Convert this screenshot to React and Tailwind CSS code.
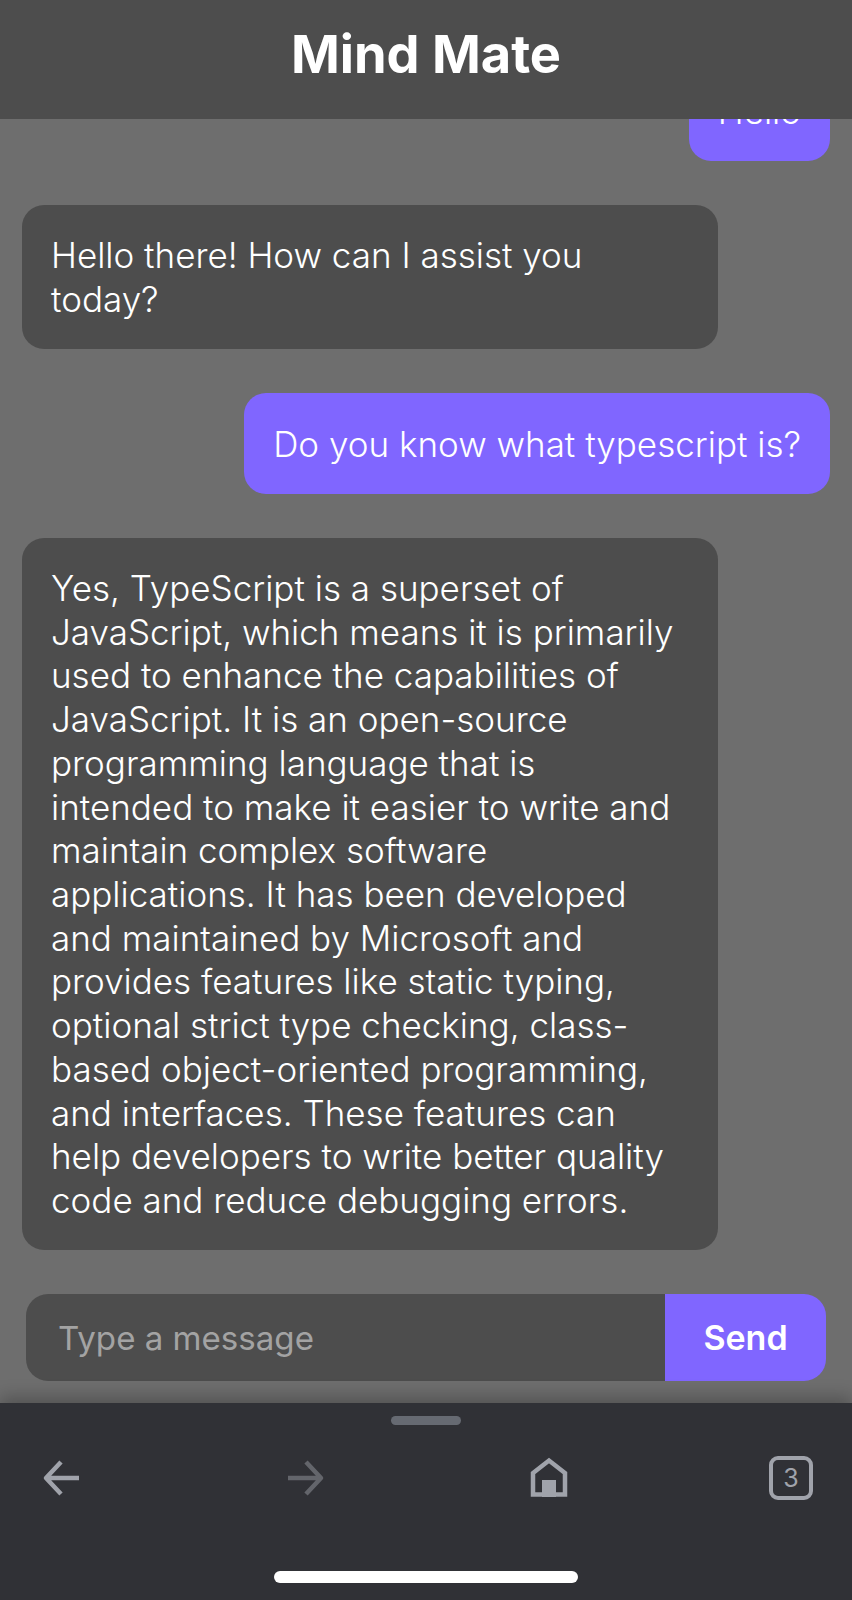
export default function App() {
  const bubble = "shrink-0 rounded-[22px] pl-[29px] pt-[29.4px] pb-[27.4px] text-[35px] leading-[43.7px] font-light";
  return (
    <div className="h-[1600px] w-[852px] flex flex-col overflow-hidden bg-[#6e6e6e] font-['Inter',sans-serif] text-white">
      <header className="relative z-10 h-[119px] shrink-0 bg-[#4d4d4d] flex items-center justify-center">
        <h1 className="text-[52.4px] leading-[63px] font-bold pb-[10px]">Mind Mate</h1>
      </header>

      <main className="flex-1 min-h-0 overflow-hidden flex flex-col justify-end gap-[44px] px-[22px] pb-[22px]">
        <div className={`${bubble} pr-[29px] self-end bg-[#8066ff]`}>Hello</div>
        <div className={`${bubble} pr-[34px] self-start w-[696px] bg-[#4d4d4d]`}>
          Hello there! How can I assist you today?
        </div>
        <div className={`${bubble} pr-[29px] self-end bg-[#8066ff]`}>Do you know what typescript is?</div>
        <div className={`${bubble} pr-[34px] self-start w-[696px] bg-[#4d4d4d]`}>
          Yes, TypeScript is a superset of JavaScript, which means it is primarily used to enhance the capabilities of JavaScript. It is an open-source programming language that is intended to make it easier to write and maintain complex software applications. It has been developed and maintained by Microsoft and provides features like static typing, optional strict type checking, class-based object-oriented programming, and interfaces. These features can help developers to write better quality code and reduce debugging errors.
        </div>
        <div className="shrink-0 mx-[4px] h-[87px] flex rounded-[22px] overflow-hidden">
          <div className="flex-1 bg-[#4d4d4d] flex items-center pl-[32px] pt-[2px] text-[33.1px] font-normal text-[#a3a3a3]">Type a message</div>
          <div className="w-[161px] bg-[#8066ff] flex items-center justify-center text-[34px] font-semibold">Send</div>
        </div>
      </main>

      <footer className="relative z-10 h-[197px] shrink-0 bg-[#303136] shadow-[0_-6px_16px_rgba(0,0,0,0.25)] flex flex-col">
        <div className="mt-[13px] self-center h-[9px] w-[70px] rounded-full bg-[#666a72]" />
        <nav className="mt-[30px] px-[39px] flex items-center justify-between">
          <svg width="46" height="46" viewBox="0 0 46 46" fill="none" stroke="#a0a3ab" strokeWidth="4.5" strokeLinejoin="round">
            <path d="M22 7 L7 23 L22 39 M7 23 H40" />
          </svg>
          <svg width="46" height="46" viewBox="0 0 46 46" fill="none" stroke="#63656b" strokeWidth="4.5" strokeLinejoin="round">
            <path d="M24 7 L39 23 L24 39 M6 23 H39" />
          </svg>
          <svg width="46" height="46" viewBox="0 0 46 46" fill="none">
            <path d="M7 39.5 V18 L23 5.5 L39 18 V39.5 Z" stroke="#a0a3ab" strokeWidth="4.5" strokeLinejoin="miter" />
            <rect x="16" y="25" width="14" height="17" fill="#a0a3ab" />
          </svg>
          <div className="w-[44px] h-[44px] rounded-[9px] border-[4.5px] border-[#a0a3ab] flex items-center justify-center text-[25px] leading-none text-[#a0a3ab]">3</div>
        </nav>
        <div className="mt-auto mb-[17px] self-center h-[12px] w-[304px] rounded-full bg-white" />
      </footer>
    </div>
  );
}
